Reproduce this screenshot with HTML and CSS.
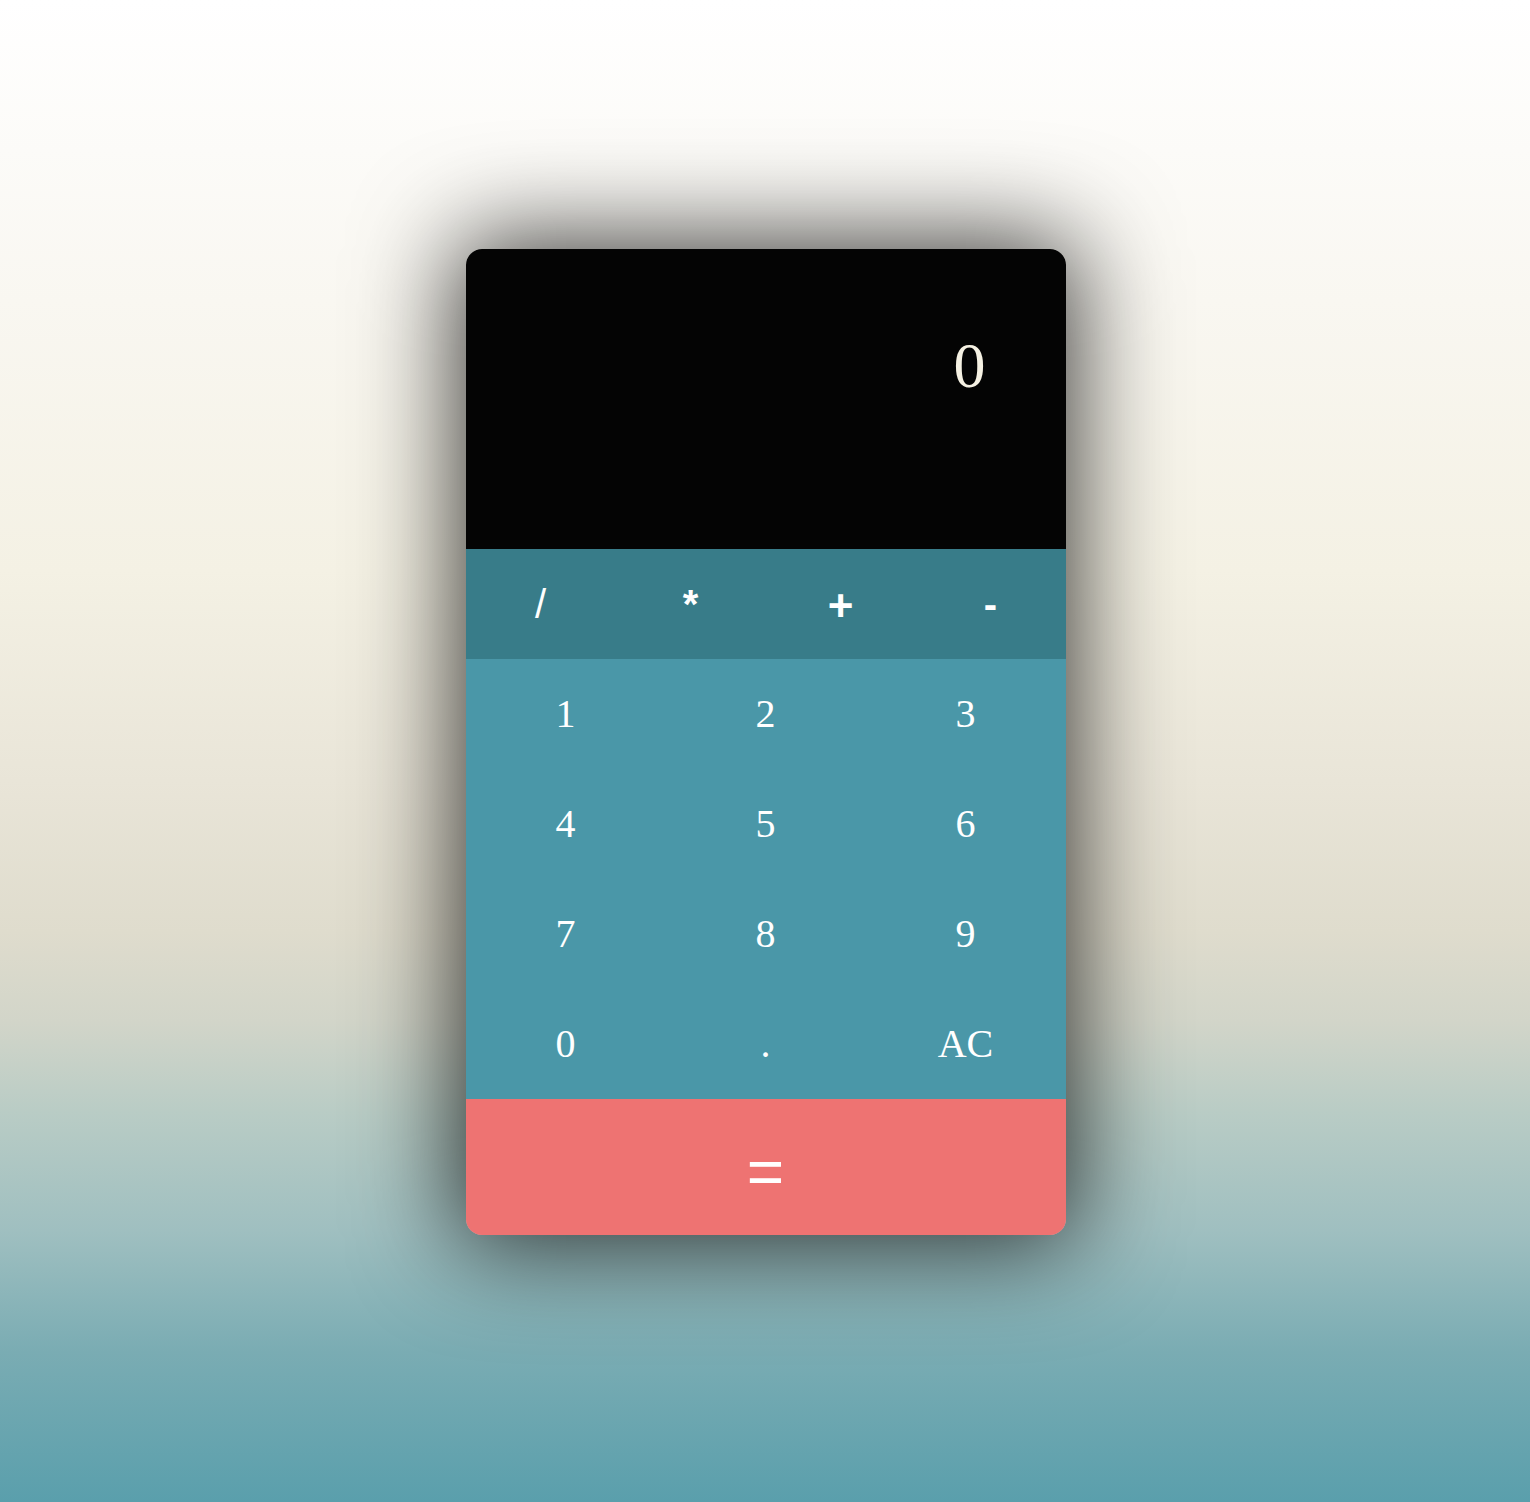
FILE: index.html
```html
<!DOCTYPE html>
<html lang="en">
<head>
<meta charset="utf-8">
<title>Calculator</title>
<link rel="stylesheet" href="styles.css">
</head>
<body>
<main class="page">
  <div class="calc">
    <div class="display">0</div>
    <div class="ops">
      <button class="op op-thin">/</button>
      <button class="op">*</button>
      <button class="op op-plus">+</button>
      <button class="op">-</button>
    </div>
    <div class="nums">
      <button class="num">1</button>
      <button class="num">2</button>
      <button class="num">3</button>
      <button class="num">4</button>
      <button class="num">5</button>
      <button class="num">6</button>
      <button class="num">7</button>
      <button class="num">8</button>
      <button class="num">9</button>
      <button class="num">0</button>
      <button class="num">.</button>
      <button class="num">AC</button>
    </div>
    <button class="equals">=</button>
  </div>
</main>
</body>
</html>
```

FILE: styles.css
```css
html, body {
  margin: 0;
  padding: 0;
}
body {
  min-height: 1502px;
  background: linear-gradient(to bottom,
    #ffffff 0%,
    #f9f7f1 20%,
    #f4f1e4 38%,
    #e9e5d8 52%,
    #dfdccd 62%,
    #d2d5c9 68%,
    #b9ccc5 74%,
    #9fbfc0 82%,
    #7aacb3 90%,
    #5a9fac 100%);
  font-family: "Liberation Serif", "Times New Roman", serif;
}
.page {
  display: flex;
  justify-content: center;
  padding-top: 249px;
  padding-left: 1px;
}
.calc {
  width: 600px;
  border-radius: 16px;
  overflow: hidden;
  display: flex;
  flex-direction: column;
  box-shadow: 0 0 100px 10px rgba(0, 0, 0, 0.75);
}
.display {
  height: 300px;
  box-sizing: border-box;
  background: #040404;
  color: #f5f1e3;
  font-size: 64px;
  text-align: right;
  padding: 80px 80px 0 0;
  line-height: normal;
}
button {
  border: 0;
  margin: 0;
  padding: 0;
  color: #ffffff;
  cursor: pointer;
}
.ops {
  display: grid;
  grid-template-columns: repeat(4, 1fr);
  height: 110px;
  background: #387c89;
}
.op {
  background: transparent;
  font-family: "Liberation Sans", Arial, sans-serif;
  font-size: 40px;
  font-weight: bold;
}
.op-thin {
  font-weight: normal;
}
.op-plus {
  font-size: 44px;
  padding-top: 4px;
}
.nums {
  display: grid;
  grid-template-columns: repeat(3, 1fr);
  grid-auto-rows: 110px;
  background: #4a97a8;
}
.num {
  background: transparent;
  font-family: "Liberation Serif", "Times New Roman", serif;
  font-size: 40px;
  padding-bottom: 2px;
}
.equals {
  height: 136px;
  background: #ee7372;
  font-family: "Liberation Sans", Arial, sans-serif;
  font-size: 64px;
  font-weight: normal;
  padding-top: 10px;
}
```
